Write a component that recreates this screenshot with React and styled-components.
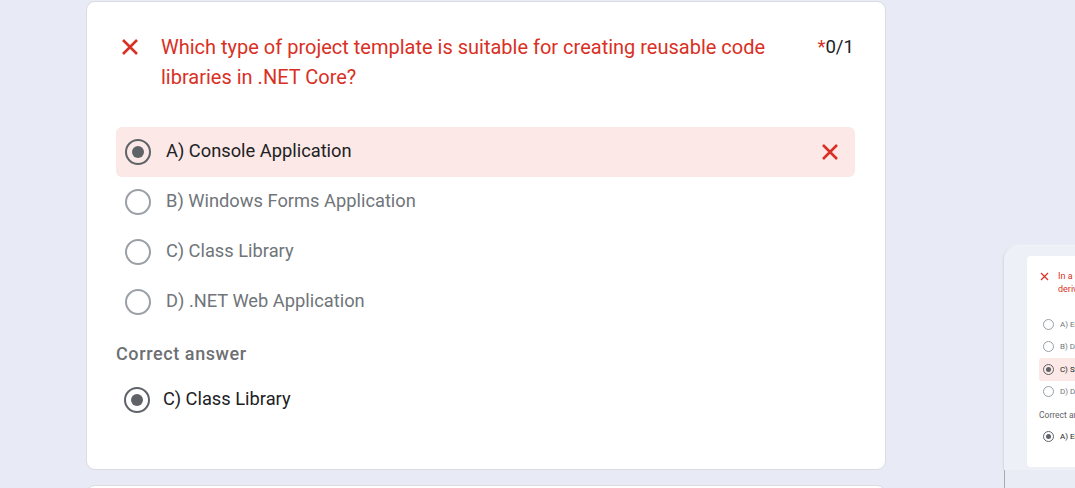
import React from "react";
import styled, { createGlobalStyle } from "styled-components";

const GlobalStyle = createGlobalStyle`
  html, body {
    margin: 0;
    padding: 0;
    overflow: hidden;
    background: #e8ebf5;
    font-family: Roboto, "Liberation Sans", Arial, sans-serif;
  }
  * { box-sizing: border-box; }
`;

const Page = styled.main`
  position: relative;
  width: 1075px;
  height: 488px;
  overflow: hidden;
  padding: 1px 0 0 86px;
  display: flex;
  flex-direction: column;
  gap: 15px;
`;

const Card = styled.section`
  width: 800px;
  background: #ffffff;
  border: 1px solid #dadce0;
  border-radius: 9px;
  padding: 30px 30px 46px 29px;
  flex-shrink: 0;
`;

const NextCard = styled(Card)`
  height: 40px;
  padding: 0;
`;

const Header = styled.header`
  display: flex;
  align-items: flex-start;
  padding-left: 5px;
`;

const IconSlot = styled.span`
  display: flex;
  flex-shrink: 0;
  margin-top: ${(p) => p.$top || 0}px;
  margin-right: ${(p) => p.$gap || 0}px;
`;

const Question = styled.h2`
  flex: 1;
  margin: 0;
  font-size: 20px;
  line-height: 30px;
  font-weight: 400;
  color: #d93025;
`;

const Score = styled.div`
  margin-left: 30px;
  margin-right: 1px;
  font-size: 18.6px;
  line-height: 30px;
  color: #202124;
  white-space: nowrap;
`;

const Star = styled.span`
  color: #d93025;
`;

const Options = styled.div`
  display: flex;
  flex-direction: column;
  margin-top: 35px;
`;

const Option = styled.div`
  height: ${(p) => p.$h || 50}px;
  display: flex;
  align-items: center;
  padding: 0 16px 0 ${(p) => p.$pl ?? 9}px;
  gap: ${(p) => p.$gap ?? 15}px;
  border-radius: 6px;
  background: ${(p) => (p.$wrong ? "#fce8e6" : "transparent")};
`;

const Radio = styled.span`
  width: 26px;
  height: 26px;
  border-radius: 50%;
  flex-shrink: 0;
  border: ${(p) => (p.$checked ? "2.5px solid #5f6368" : "2px solid #9aa0a6")};
  display: flex;
  align-items: center;
  justify-content: center;
  &::after {
    content: "";
    width: 12px;
    height: 12px;
    border-radius: 50%;
    background: #5f6368;
    display: ${(p) => (p.$checked ? "block" : "none")};
  }
`;

const OptionText = styled.span`
  flex: 1;
  font-size: 18.3px;
  line-height: 22px;
  padding-bottom: 3px;
  color: ${(p) => (p.$muted ? "#70757a" : "#202124")};
`;

const CorrectLabel = styled.div`
  margin-top: 15px;
  font-size: 18px;
  line-height: 24px;
  font-weight: 500;
  color: #6d6f73;
  letter-spacing: 0.6px;
`;

const CorrectBlock = styled.div`
  margin-top: 11px;
`;

/* ---- thumbnail preview on the right ---- */

const Preview = styled.aside`
  position: absolute;
  left: 1004px;
  top: 246px;
  width: 100px;
  height: 242px;
  display: flex;
  flex-direction: column;
`;

const PreviewFrame = styled.div`
  height: 224px;
  background: #eef0f7;
  border-top-left-radius: 14px;
  box-shadow: -1px 0 2px rgba(60, 64, 67, 0.12), 0 -1px 1px rgba(255, 255, 255, 0.8);
  padding: 10px 0 0 23px;
`;

const Stub = styled.div`
  flex: 1;
  border-left: 1px solid #a6a9b0;
  background: #e9ecf5;
`;

const MiniCard = styled.div`
  height: 211px;
  background: #ffffff;
  border-radius: 4px 0 0 4px;
  padding: 14px 0 0 13px;
  overflow: hidden;
`;

const MiniHeader = styled.div`
  display: flex;
  align-items: flex-start;
  gap: 9px;
`;

const MiniQuestion = styled.div`
  font-size: 9px;
  line-height: 13px;
  color: #d93025;
  white-space: nowrap;
`;

const MiniOptions = styled.div`
  display: flex;
  flex-direction: column;
  margin-top: 17px;
  margin-left: -1px;
`;

const MiniOption = styled.div`
  height: 22.5px;
  display: flex;
  align-items: center;
  gap: 6px;
  padding-left: 4px;
  border-radius: 3px 0 0 3px;
  background: ${(p) => (p.$wrong ? "#fce8e6" : "transparent")};
  white-space: nowrap;
`;

const MiniRadio = styled.span`
  width: 11px;
  height: 11px;
  border-radius: 50%;
  flex-shrink: 0;
  border: 1px solid ${(p) => (p.$checked ? "#5f6368" : "#9aa0a6")};
  display: flex;
  align-items: center;
  justify-content: center;
  &::after {
    content: "";
    width: 5px;
    height: 5px;
    border-radius: 50%;
    background: #5f6368;
    display: ${(p) => (p.$checked ? "block" : "none")};
  }
`;

const MiniText = styled.span`
  font-size: 8px;
  color: ${(p) => (p.$muted ? "#70757a" : "#202124")};
`;

const MiniLabel = styled.div`
  margin: 6px 0 0 -1px;
  font-size: 8.5px;
  line-height: 12px;
  color: #5f6368;
  white-space: nowrap;
`;

const MiniCorrect = styled.div`
  margin-top: 4px;
  margin-left: -1px;
`;

const CrossIcon = ({ size = 18, stroke = 2.6 }) => (
  <svg width={size} height={size} viewBox="0 0 18 18" aria-hidden="true">
    <path
      d="M2 2 L16 16 M16 2 L2 16"
      stroke="#d93025"
      strokeWidth={stroke}
      strokeLinecap="butt"
      fill="none"
    />
  </svg>
);

const options = [
  "A) Console Application",
  "B) Windows Forms Application",
  "C) Class Library",
  "D) .NET Web Application",
];

const miniOptions = [
  "A) Encapsulation",
  "B) Delegation",
  "C) Static binding",
  "D) Data hiding",
];

export default function App() {
  return (
    <>
      <GlobalStyle />
      <Page>
        <Card>
          <Header>
            <IconSlot $top={6} $gap={22}>
              <CrossIcon />
            </IconSlot>
            <Question>
              Which type of project template is suitable for creating reusable code
              libraries in .NET Core?
            </Question>
            <Score>
              <Star>*</Star>0/1
            </Score>
          </Header>

          <Options>
            {options.map((text, i) => {
              const chosen = i === 0;
              return (
                <Option key={text} $wrong={chosen}>
                  <Radio $checked={chosen} />
                  <OptionText $muted={!chosen}>{text}</OptionText>
                  {chosen && (
                    <IconSlot>
                      <CrossIcon />
                    </IconSlot>
                  )}
                </Option>
              );
            })}
          </Options>

          <CorrectLabel>Correct answer</CorrectLabel>
          <CorrectBlock>
            <Option $h={46} $pl={8} $gap={13}>
              <Radio $checked />
              <OptionText>C) Class Library</OptionText>
            </Option>
          </CorrectBlock>
        </Card>
        <NextCard />

        <Preview>
          <PreviewFrame>
            <MiniCard>
              <MiniHeader>
                <IconSlot $top={2}>
                  <CrossIcon size={9} stroke={2.4} />
                </IconSlot>
                <MiniQuestion>
                  In a class hierarchy, which concept allows a
                  <br />
                  derived class to provide its own implementation?
                </MiniQuestion>
              </MiniHeader>
              <MiniOptions>
                {miniOptions.map((text, i) => {
                  const chosen = i === 2;
                  return (
                    <MiniOption key={text} $wrong={chosen}>
                      <MiniRadio $checked={chosen} />
                      <MiniText $muted={!chosen}>{text}</MiniText>
                    </MiniOption>
                  );
                })}
              </MiniOptions>
              <MiniLabel>Correct answer</MiniLabel>
              <MiniCorrect>
                <MiniOption>
                  <MiniRadio $checked />
                  <MiniText>A) Encapsulation</MiniText>
                </MiniOption>
              </MiniCorrect>
            </MiniCard>
          </PreviewFrame>
          <Stub />
        </Preview>
      </Page>
    </>
  );
}
